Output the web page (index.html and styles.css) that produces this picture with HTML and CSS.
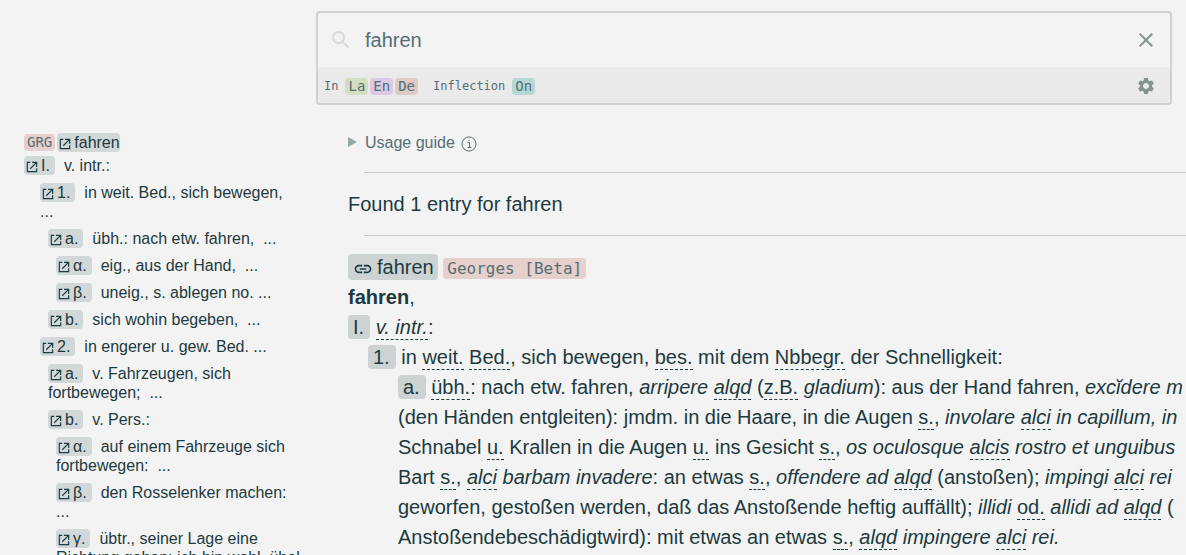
FILE: index.html
```
<!DOCTYPE html>
<html lang="de">
<head>
<meta charset="utf-8">
<meta name="viewport" content="width=device-width, initial-scale=1">
<title>fahren</title>
<link rel="stylesheet" href="styles.css">
</head>
<body>
<svg class="sprite" aria-hidden="true">
  <symbol id="jump" viewBox="0 0 24 24"><path d="M9 4H4v16h16v-6M12 4h8v8M19 5 9 15" fill="none" stroke="currentColor" stroke-width="2"/></symbol>
  <symbol id="link" viewBox="0 0 24 24"><path d="M3.900 12c0-1.710 1.390-3.100 3.100-3.100h4V7H7c-2.760 0-5 2.240-5 5s2.240 5 5 5h4v-1.900H7c-1.710 0-3.100-1.390-3.100-3.100zM8 13h8v-2H8v2zm9-6h-4v1.900h4c1.710 0 3.100 1.390 3.100 3.100s-1.390 3.100-3.100 3.100h-4V17h4c2.760 0 5-2.240 5-5s-2.240-5-5-5z" fill="currentColor"/></symbol>
</svg>
<div class="page">
  <nav class="toc" aria-label="Outline">
    <div class="toc-head"><span class="code red">GRG</span><a class="jump" href="#entry"><svg><use href="#jump"/></svg>fahren</a></div>
    <div class="toc-item"><a class="jump label" href="#s1"><svg><use href="#jump"/></svg>I.</a>v. intr.:</div>
    <div class="toc-item l1"><a class="jump label" href="#s2"><svg><use href="#jump"/></svg>1.</a>in weit. Bed., sich bewegen,&nbsp; ...</div>
    <div class="toc-item l2"><a class="jump label" href="#s3"><svg><use href="#jump"/></svg>a.</a>übh.: nach etw. fahren,&nbsp; ...</div>
    <div class="toc-item l3"><a class="jump label" href="#"><svg><use href="#jump"/></svg>α.</a>eig., aus der Hand,&nbsp; ...</div>
    <div class="toc-item l3"><a class="jump label" href="#"><svg><use href="#jump"/></svg>β.</a>uneig., s. ablegen no. ...</div>
    <div class="toc-item l2"><a class="jump label" href="#"><svg><use href="#jump"/></svg>b.</a>sich wohin begeben,&nbsp; ...</div>
    <div class="toc-item l1"><a class="jump label" href="#"><svg><use href="#jump"/></svg>2.</a>in engerer u. gew. Bed. ...</div>
    <div class="toc-item l2"><a class="jump label" href="#"><svg><use href="#jump"/></svg>a.</a>v. Fahrzeugen, sich fortbewegen;&nbsp; ...</div>
    <div class="toc-item l2"><a class="jump label" href="#"><svg><use href="#jump"/></svg>b.</a>v. Pers.:</div>
    <div class="toc-item l3"><a class="jump label" href="#"><svg><use href="#jump"/></svg>α.</a>auf einem Fahrzeuge sich fortbewegen:&nbsp; ...</div>
    <div class="toc-item l3"><a class="jump label" href="#"><svg><use href="#jump"/></svg>β.</a>den Rosselenker machen:&nbsp; ...</div>
    <div class="toc-item l3"><a class="jump label" href="#"><svg><use href="#jump"/></svg>γ.</a>übtr., seiner Lage eine Richtung geben: ich bin wohl, übel</div>
  </nav>
  <main class="main">
    <form class="search">
      <div class="search-row">
        <svg class="search-icon" viewBox="0 0 24 24" aria-hidden="true"><path d="M15.500 14h-.79l-.28-.27A6.470 6.470 0 0 0 16 9.500 6.500 6.500 0 1 0 9.500 16c1.610 0 3.090-.59 4.230-1.570l.27.28v.79l5 4.990L20.490 19l-4.990-5zm-6 0C7.010 14 5 11.990 5 9.500S7.010 5 9.500 5 14 7.010 14 9.500 11.990 14 9.500 14z" fill="currentColor"/></svg>
        <input class="query" type="text" value="fahren" aria-label="Search">
        <button class="icon-button clear" type="button" aria-label="Clear"><svg viewBox="0 0 24 24"><path d="M19 6.410 17.590 5 12 10.590 6.410 5 5 6.410 10.590 12 5 17.590 6.410 19 12 13.410 17.590 19 19 17.590 13.410 12z" fill="currentColor"/></svg></button>
      </div>
      <div class="options">
        <span class="caption">In</span>
        <span class="chips"><span class="chip green">La</span><span class="chip purple">En</span><span class="chip rose">De</span></span>
        <span class="caption">Inflection</span>
        <span class="chip teal">On</span>
        <button class="icon-button settings" type="button" aria-label="Settings"><svg viewBox="0 0 24 24"><path d="M19.140 12.940c.04-.3.06-.61.06-.94 0-.32-.02-.64-.07-.94l2.030-1.580c.18-.14.23-.41.12-.61l-1.920-3.320c-.12-.22-.37-.29-.59-.22l-2.390.96c-.5-.38-1.030-.7-1.620-.94l-.36-2.540c-.04-.24-.24-.41-.48-.41h-3.840c-.24 0-.43.17-.47.41l-.36 2.540c-.59.24-1.130.57-1.620.94l-2.390-.96c-.22-.08-.47 0-.59.22L2.740 8.870c-.12.21-.08.47.12.61l2.030 1.580c-.05.3-.09.63-.09.94s.02.64.07.94l-2.030 1.580c-.18.14-.23.41-.12.61l1.920 3.320c.12.22.37.29.59.22l2.390-.96c.5.38 1.030.7 1.620.94l.36 2.540c.05.24.24.41.48.41h3.840c.24 0 .44-.17.47-.41l.36-2.540c.59-.24 1.130-.56 1.620-.94l2.390.96c.22.08.47 0 .59-.22l1.920-3.320c.12-.22.07-.47-.12-.61l-2.010-1.580zM12 15.600c-1.980 0-3.600-1.620-3.600-3.600s1.620-3.600 3.600-3.600 3.600 1.620 3.600 3.600-1.620 3.600-3.600 3.600z" fill="currentColor"/></svg></button>
      </div>
    </form>
    <div class="results">
      <details class="guide"><summary><span class="marker"></span>Usage guide <svg class="info" viewBox="0 0 16 16" aria-hidden="true"><circle cx="8" cy="8" r="7" fill="none" stroke="currentColor"/><path d="M6.500 6.500h2v5M6.500 11.500h4M7.500 4.500h1" fill="none" stroke="currentColor"/></svg></summary></details>
      <hr class="rule">
      <p class="found">Found 1 entry for fahren</p>
      <hr class="rule last">
      <article class="entry" id="entry">
        <div><a class="key head" href="#entry"><svg><use href="#link"/></svg>fahren</a> <span class="source">Georges [Beta]</span></div>
        <div><b>fahren</b>,</div>
        <div id="s1"><a class="key" href="#s1">I.</a> <i><span class="abbr">v. intr.</span></i>:</div>
        <div class="sense" id="s2"><a class="key" href="#s2">1.</a> in <span class="abbr">weit.</span> <span class="abbr">Bed.</span>, sich bewegen, <span class="abbr">bes.</span> mit dem <span class="abbr">Nbbegr.</span> der Schnelligkeit:</div>
        <div class="subsense" id="s3"><a class="key" href="#s3">a.</a> <span class="abbr">übh.</span>: nach etw. fahren, <i>arripere <span class="abbr">alqd</span></i> (<span class="abbr">z.B.</span> <i>gladium</i>): aus der Hand fahren, <i>excĭdere m</i><br>
        (den Händen entgleiten): jmdm. in die Haare, in die Augen <span class="abbr">s.</span>, <i>involare <span class="abbr">alci</span> in capillum, in</i><br>
        Schnabel <span class="abbr">u.</span> Krallen in die Augen <span class="abbr">u.</span> ins Gesicht <span class="abbr">s.</span>, <i>os oculosque <span class="abbr">alcis</span> rostro et unguibus</i><br>
        Bart <span class="abbr">s.</span>, <i><span class="abbr">alci</span> barbam invadere</i>: an etwas <span class="abbr">s.</span>, <i>offendere ad <span class="abbr">alqd</span></i> (anstoßen); <i>impingi <span class="abbr">alci</span> rei</i><br>
        geworfen, gestoßen werden, daß das Anstoßende heftig auffällt); <i>illidi</i> <span class="abbr">od.</span> <i>allidi ad <span class="abbr">alqd</span></i> (<br>
        Anstoßendebeschädigtwird): mit etwas an etwas <span class="abbr">s.</span>, <i><span class="abbr">alqd</span> impingere <span class="abbr">alci</span> rei.</i></div>
      </article>
    </div>
  </main>
</div>
</body>
</html>
```
FILE: styles.css
```
* { box-sizing: border-box; }
body { margin: 0; background: #f3f3f3; color: #1c3a40; font-family: "Liberation Sans", Arial, sans-serif; overflow: hidden; }
a { color: inherit; text-decoration: none; }
.sprite { display: none; }
.page { display: flex; height: 100vh; overflow: hidden; }

.toc { flex: none; width: 317px; padding: 133px 16px 0 24px; font-size: 16px; line-height: 19px; }
.toc-head { display: flex; align-items: center; gap: 2px; margin-bottom: 4px; }
.toc-item { margin-bottom: 8px; }
.l1 { margin-left: 16px; }
.l2 { margin-left: 24px; }
.l3 { margin-left: 32px; }
.jump { display: inline-block; height: 19px; border-radius: 4px; background: #d1d8d7; }
.jump svg { width: 14px; height: 14px; margin: 0 2px 0 1px; vertical-align: -3px; }
.label { padding-right: 5px; margin-right: 9px; }
.code { padding: 0 3px; border-radius: 4px; font: 14px/17px "DejaVu Sans Mono", monospace; color: #586e75; }
.red, .source { background: #e5d0cd; }

.main { flex: 1; min-width: 0; }
.search { margin: 11px 14px 0 -1px; border: 2px solid #d0d0d0; border-radius: 4px; }
.search-row { display: flex; align-items: center; height: 54px; padding: 0 12px 0 11px; }
.search-icon { width: 24px; height: 24px; color: #d5dad9; }
.query { flex: 1; min-width: 0; margin-left: 12px; padding: 0; border: 0; outline: 0; background: none; color: #546e75; font: 20px "Liberation Sans", Arial, sans-serif; }
.icon-button { display: flex; padding: 0; border: 0; background: none; color: #839391; }
.icon-button svg { width: 20px; height: 20px; }
.clear svg { width: 24px; height: 24px; }
.options { display: flex; align-items: center; height: 36px; padding: 2px 14px 0 6px; background: #eaeaea; border-radius: 4px; font: 12px/17px "DejaVu Sans Mono", monospace; color: #546e75; }
.caption { margin-right: 7px; }
.chips { display: flex; gap: 2px; margin-right: 15px; }
.chip { padding: 0 3px; border-radius: 4px; font-size: 14px; }
.green { background: #d2ddc1; }
.purple { background: #dbcae6; }
.rose { background: #dfcac6; }
.teal { background: #b6d8d5; }
.settings { margin-left: auto; }

.results { padding: 26px 0 0 31px; overflow: hidden; white-space: nowrap; }
.guide { font-size: 16px; line-height: 24px; color: #546e75; }
.guide summary { display: flex; align-items: center; list-style: none; }
.marker { margin: 0 8px 2px 0; border-left: 9px solid #98a7a8; border-top: 5px solid transparent; border-bottom: 5px solid transparent; }
.info { width: 16px; height: 16px; margin: 1px 0 0 6px; }
.rule { margin: 17px 0 16px 16px; border: 0; border-top: 1px solid #c2c9c9; }
.last { margin-top: 16px; }
.found { margin: 0; font-size: 20px; line-height: 30px; }
.entry { font-size: 20px; line-height: 30px; }
.key { display: inline-block; padding: 0 6px 0 5px; border-radius: 4px; background: #ccd3d2; line-height: 24px; }
.head { padding: 1px 4px 1px 5px; }
.head svg { width: 20px; height: 20px; margin-right: 4px; vertical-align: -5px; }
.source { padding: 1px 4px; border-radius: 4px; font: 16px/20px "DejaVu Sans Mono", monospace; color: #586e75; }
.abbr { padding-bottom: 1px; border-bottom: 1px dashed #1c3a40; }
.sense { margin-left: 20px; }
.subsense { margin-left: 50px; }
```
